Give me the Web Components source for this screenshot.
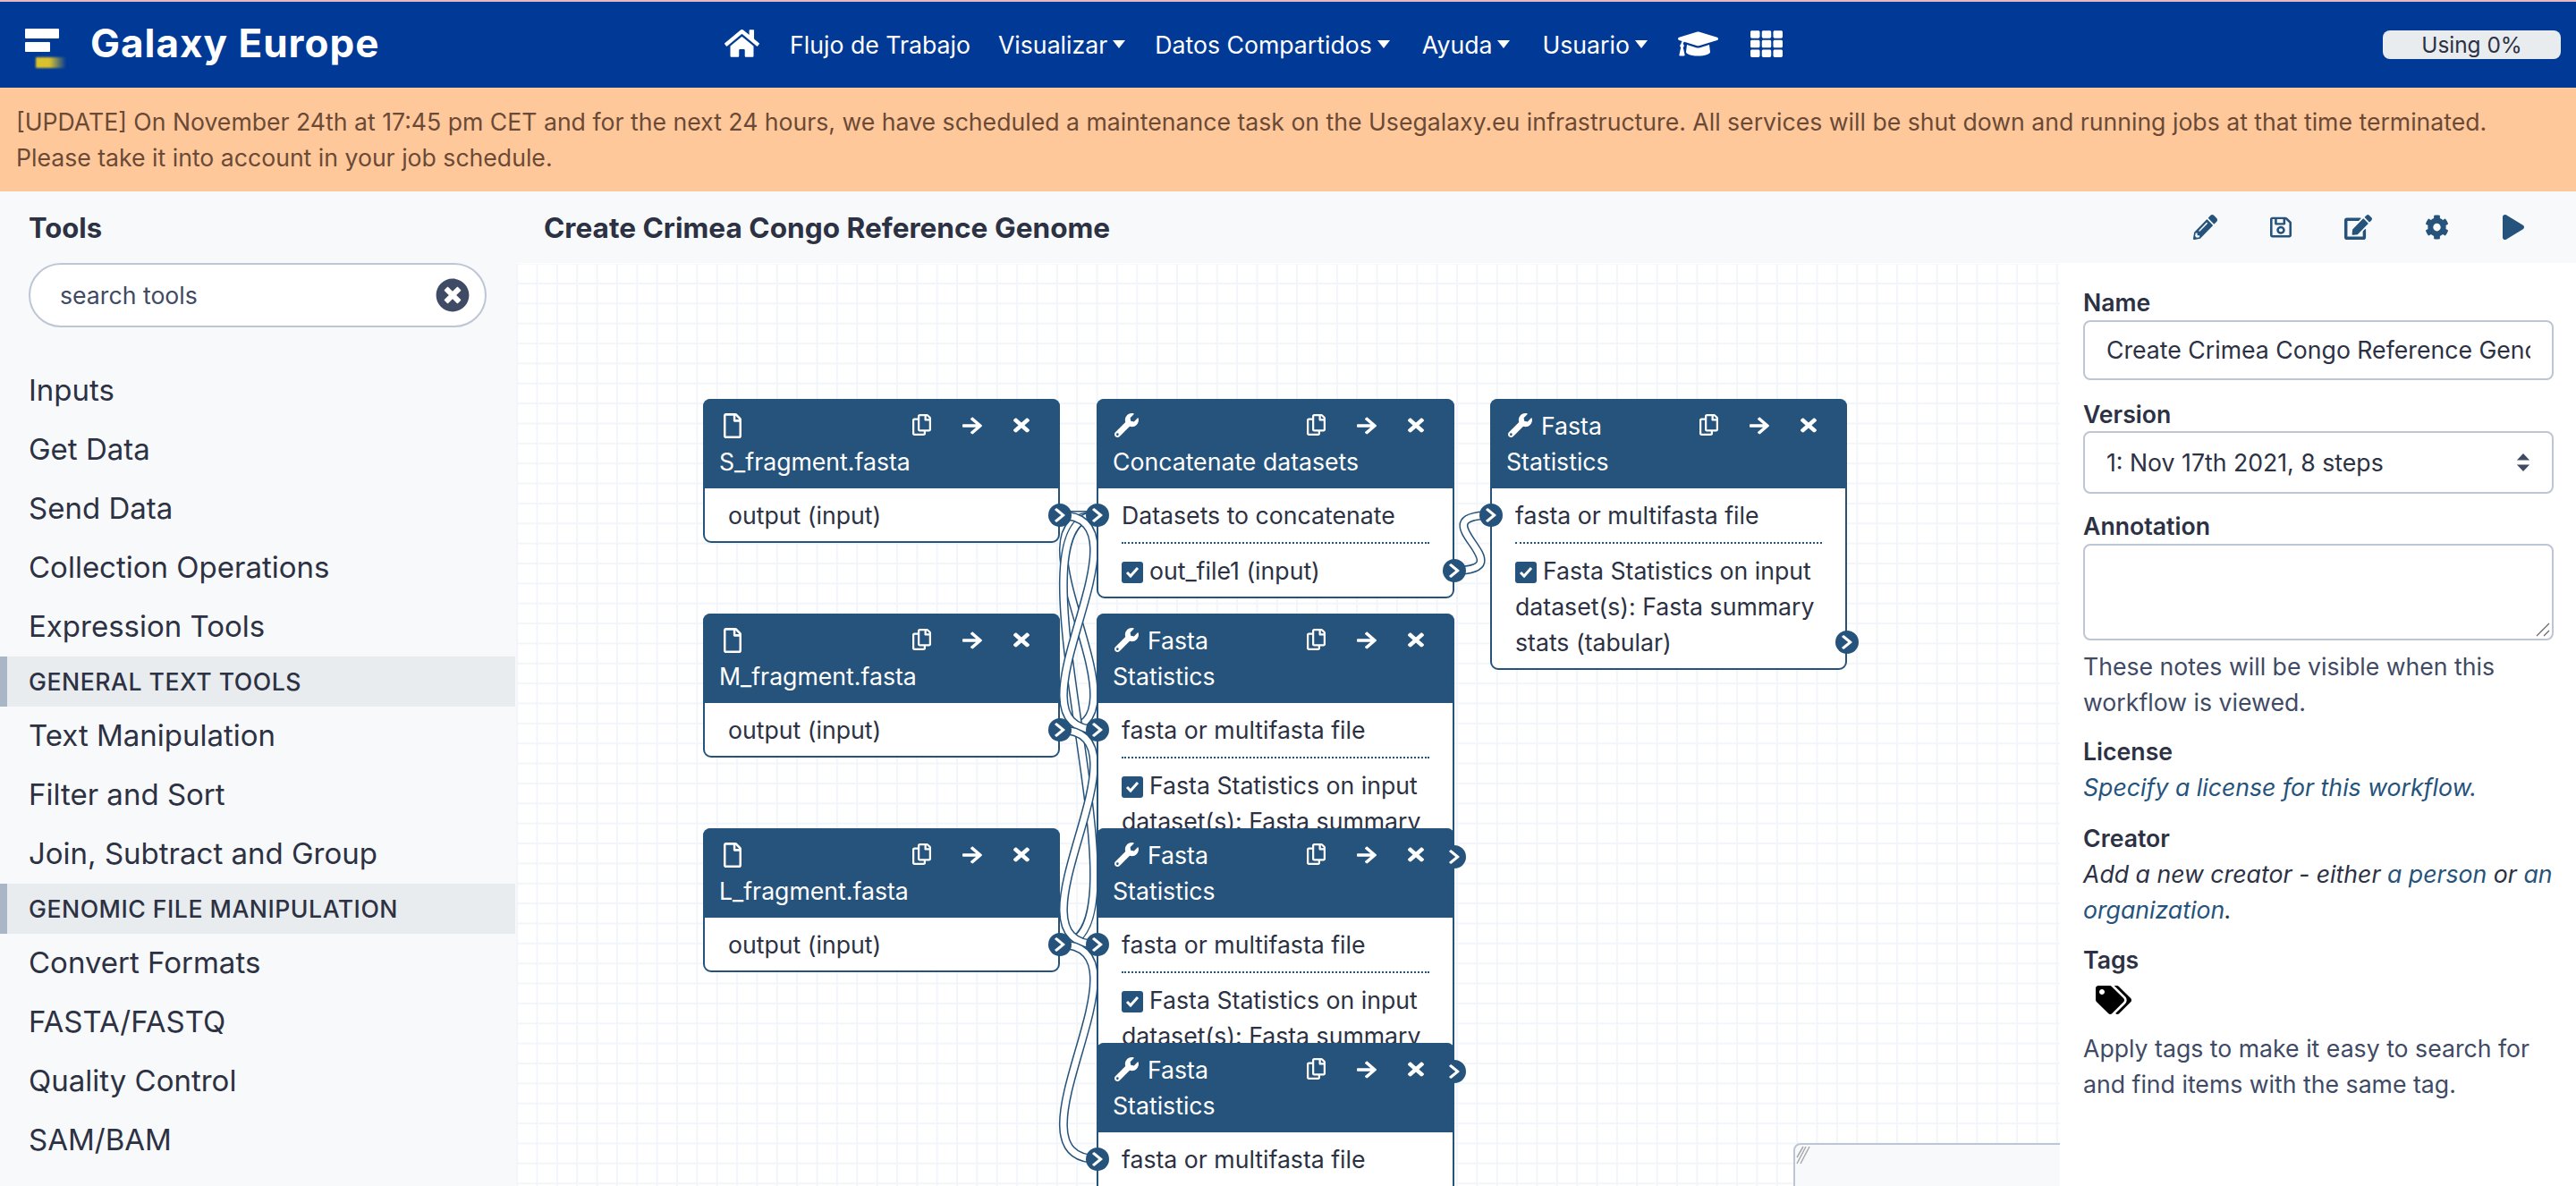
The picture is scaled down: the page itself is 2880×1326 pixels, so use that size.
<!DOCTYPE html>
<html lang="es">
<head>
<meta charset="utf-8">
<title>Galaxy Europe</title>
<style>
html,body{margin:0;padding:0;height:1326px;overflow:hidden;background:#fff;}
body{font:26.67px/40px Inter,"Noto Sans",sans-serif;color:#2c3143;}
gx-app{height:1326px;}
</style>
</head>
<body>
<gx-app>
  <gx-masthead slot="top" brand="Galaxy Europe" usage="Using 0%"></gx-masthead>
  <gx-banner slot="top">[UPDATE] On November 24th at 17:45 pm CET and for the next 24 hours, we have scheduled a maintenance task on the Usegalaxy.eu infrastructure. All services will be shut down and running jobs at that time terminated. Please take it into account in your job schedule.</gx-banner>
  <gx-toolbox slot="left"></gx-toolbox>
  <gx-editor-head slot="head">Create Crimea Congo Reference Genome</gx-editor-head>
  <gx-canvas slot="canvas">
    <gx-node icon="file" name="S_fragment.fasta" style="left:209px;top:152px;width:399px">
      <gx-row out>output (input)</gx-row>
    </gx-node>
    <gx-node icon="wrench" name="Concatenate datasets" style="left:649px;top:152px;width:400px">
      <gx-row in sep>Datasets to concatenate</gx-row>
      <gx-row out check>out_file1 (input)</gx-row>
    </gx-node>
    <gx-node icon="wrench" name="Fasta Statistics" style="left:1089px;top:152px;width:399px">
      <gx-row in sep>fasta or multifasta file</gx-row>
      <gx-row out check>Fasta Statistics on input dataset(s): Fasta summary stats (tabular)</gx-row>
    </gx-node>
    <gx-node icon="file" name="M_fragment.fasta" style="left:209px;top:392px;width:399px">
      <gx-row out>output (input)</gx-row>
    </gx-node>
    <gx-node icon="wrench" name="Fasta Statistics" style="left:649px;top:392px;width:400px">
      <gx-row in sep>fasta or multifasta file</gx-row>
      <gx-row out check>Fasta Statistics on input dataset(s): Fasta summary stats (tabular)</gx-row>
    </gx-node>
    <gx-node icon="file" name="L_fragment.fasta" style="left:209px;top:632px;width:399px">
      <gx-row out>output (input)</gx-row>
    </gx-node>
    <gx-node icon="wrench" name="Fasta Statistics" style="left:649px;top:632px;width:400px">
      <gx-row in sep>fasta or multifasta file</gx-row>
      <gx-row out check>Fasta Statistics on input dataset(s): Fasta summary stats (tabular)</gx-row>
    </gx-node>
    <gx-node icon="wrench" name="Fasta Statistics" style="left:649px;top:872px;width:400px">
      <gx-row in sep>fasta or multifasta file</gx-row>
      <gx-row out check>Fasta Statistics on input dataset(s): Fasta summary stats (tabular)</gx-row>
    </gx-node>
    <gx-minimap></gx-minimap>
  </gx-canvas>
  <gx-side slot="side"></gx-side>
</gx-app>
<script>
const ICONS={
home:['0 0 576 512','M280.37 148.26L96 300.11V464a16 16 0 0 0 16 16l112.06-.29a16 16 0 0 0 15.92-16V368a16 16 0 0 1 16-16h64a16 16 0 0 1 16 16v95.64a16 16 0 0 0 16 16.05L464 480a16 16 0 0 0 16-16V300L295.67 148.26a12.19 12.19 0 0 0-15.3 0zM571.6 251.47L488 182.56V44.05a12 12 0 0 0-12-12h-56a12 12 0 0 0-12 12v72.61L318.47 43a48 48 0 0 0-61 0L4.34 251.47a12 12 0 0 0-1.6 16.9l25.5 31A12 12 0 0 0 45.15 301l235.22-193.74a12.19 12.19 0 0 1 15.3 0L530.9 301a12 12 0 0 0 16.9-1.6l25.5-31a12 12 0 0 0-1.7-16.93z'],
cap:['0 0 640 512','M622.34 153.2L343.4 67.5c-15.2-4.67-31.6-4.67-46.79 0L17.66 153.2c-23.54 7.23-23.54 38.36 0 45.59l48.63 14.94c-10.67 13.19-17.23 29.28-17.88 46.9C38.78 266.15 32 276.11 32 288c0 10.78 5.68 19.85 13.86 25.65L20.33 428.53C18.11 438.52 25.71 448 35.94 448h56.11c10.24 0 17.84-9.48 15.62-19.47L82.14 313.65C90.32 307.85 96 298.78 96 288c0-11.57-6.47-21.25-15.66-26.87.76-15.02 8.44-28.3 20.69-36.72L296.6 284.5c9.06 2.78 26.44 6.25 46.79 0l278.95-85.7c23.55-7.24 23.55-38.36 0-45.6zM352.79 315.09c-28.53 8.76-52.84 3.92-65.59 0l-145.02-44.55L128 384c0 35.35 85.96 64 192 64s192-28.65 192-64l-14.18-113.47-145.03 44.56z'],
th:['0 0 512 512','M149.333 56v80c0 13.255-10.745 24-24 24H24c-13.255 0-24-10.745-24-24V56c0-13.255 10.745-24 24-24h101.333c13.255 0 24 10.745 24 24zm181.334 240v-80c0-13.255-10.745-24-24-24H205.333c-13.255 0-24 10.745-24 24v80c0 13.255 10.745 24 24 24h101.333c13.256 0 24.001-10.745 24.001-24zm32-240v80c0 13.255 10.745 24 24 24H488c13.255 0 24-10.745 24-24V56c0-13.255-10.745-24-24-24H386.667c-13.255 0-24 10.745-24 24zm-32 80V56c0-13.255-10.745-24-24-24H205.333c-13.255 0-24 10.745-24 24v80c0 13.255 10.745 24 24 24h101.333c13.256 0 24.001-10.745 24.001-24zm-205.334 56H24c-13.255 0-24 10.745-24 24v80c0 13.255 10.745 24 24 24h101.333c13.255 0 24-10.745 24-24v-80c0-13.255-10.745-24-24-24zM0 376v80c0 13.255 10.745 24 24 24h101.333c13.255 0 24-10.745 24-24v-80c0-13.255-10.745-24-24-24H24c-13.255 0-24 10.745-24 24zm386.667-56H488c13.255 0 24-10.745 24-24v-80c0-13.255-10.745-24-24-24H386.667c-13.255 0-24 10.745-24 24v80c0 13.255 10.745 24 24 24zm0 160H488c13.255 0 24-10.745 24-24v-80c0-13.255-10.745-24-24-24H386.667c-13.255 0-24 10.745-24 24v80c0 13.255 10.745 24 24 24zM181.333 376v80c0 13.255 10.745 24 24 24h101.333c13.255 0 24-10.745 24-24v-80c0-13.255-10.745-24-24-24H205.333c-13.255 0-24 10.745-24 24z'],
times:['0 0 352 512','M242.72 256l100.07-100.07c12.28-12.28 12.28-32.19 0-44.48l-22.24-22.24c-12.28-12.28-32.19-12.28-44.48 0L176 189.28 75.93 89.21c-12.28-12.28-32.19-12.28-44.48 0L9.21 111.45c-12.28 12.28-12.28 32.19 0 44.48L109.28 256 9.21 356.07c-12.28 12.28-12.28 32.19 0 44.48l22.24 22.24c12.28 12.28 32.2 12.28 44.48 0L176 322.72l100.07 100.07c12.28 12.28 32.2 12.28 44.48 0l22.24-22.24c12.28-12.28 12.28-32.19 0-44.48L242.72 256z'],
timescircle:['0 0 512 512','M256 8C119 8 8 119 8 256s111 248 248 248 248-111 248-248S393 8 256 8zm121.6 313.1c4.7 4.7 4.7 12.3 0 17L338 377.6c-4.7 4.7-12.3 4.7-17 0L256 312l-65.1 65.6c-4.7 4.7-12.3 4.7-17 0L134.4 338c-4.7-4.7-4.7-12.3 0-17l65.6-65-65.6-65.1c-4.7-4.7-4.7-12.3 0-17l39.6-39.6c4.7-4.7 12.3-4.7 17 0l65 65.7 65.1-65.6c4.7-4.7 12.3-4.7 17 0l39.6 39.6c4.7 4.7 4.7 12.3 0 17L312 256l65.6 65.1z'],
pencil:['0 0 512 512','M497.9 142.1l-46.1 46.1c-4.7 4.7-12.3 4.7-17 0l-111-111c-4.7-4.7-4.7-12.3 0-17l46.1-46.1c18.7-18.7 49.1-18.7 67.9 0l60.1 60.1c18.8 18.7 18.8 49.1 0 67.9zM284.2 99.8L21.6 362.4.4 483.9c-2.9 16.4 11.4 30.6 27.8 27.8l121.5-21.3 262.6-262.6c4.7-4.7 4.7-12.3 0-17l-111-111c-4.8-4.7-12.4-4.7-17.1 0zM124.1 339.9c-5.5-5.5-5.5-14.3 0-19.8l154-154c5.5-5.5 14.3-5.5 19.8 0s5.5 14.3 0 19.8l-154 154c-5.5 5.5-14.3 5.5-19.8 0zM88 424h48v36.3l-64.5 11.3-31.1-31.1L51.7 376H88v48z'],
save:['0 0 448 512','M433.941 129.941l-83.882-83.882A48 48 0 0 0 316.118 32H48C21.49 32 0 53.49 0 80v352c0 26.51 21.49 48 48 48h352c26.51 0 48-21.49 48-48V163.882a48 48 0 0 0-14.059-33.941zM272 80v80H144V80h128zm122 352H54a6 6 0 0 1-6-6V86a6 6 0 0 1 6-6h42v104c0 13.255 10.745 24 24 24h176c13.255 0 24-10.745 24-24V83.882l78.243 78.243a6 6 0 0 1 1.757 4.243V426a6 6 0 0 1-6 6zM224 232c-48.523 0-88 39.477-88 88s39.477 88 88 88 88-39.477 88-88-39.477-88-88-88zm0 128c-22.056 0-40-17.944-40-40s17.944-40 40-40 40 17.944 40 40-17.944 40-40 40z'],
edit:['0 0 576 512','M402.6 83.2l90.2 90.2c3.8 3.8 3.8 10 0 13.8L274.4 405.6l-92.8 10.3c-12.4 1.4-22.9-9.1-21.5-21.5l10.3-92.8L388.8 83.2c3.8-3.8 10-3.8 13.8 0zm162-22.9l-48.8-48.8c-15.2-15.2-39.9-15.2-55.2 0l-35.4 35.4c-3.8 3.8-3.8 10 0 13.8l90.2 90.2c3.8 3.8 10 3.8 13.8 0l35.4-35.4c15.2-15.3 15.2-40 0-55.2zM384 346.2V448H64V128h229.8c3.2 0 6.2-1.3 8.5-3.5l40-40c7.6-7.6 2.2-20.5-8.5-20.5H48C21.5 64 0 85.5 0 112v352c0 26.5 21.5 48 48 48h352c26.5 0 48-21.5 48-48V306.2c0-10.7-12.9-16-20.5-8.5l-40 40c-2.2 2.3-3.5 5.3-3.5 8.5z'],
cog:['0 0 512 512','M487.4 315.7l-42.6-24.6c4.3-23.2 4.3-47 0-70.2l42.6-24.6c4.9-2.8 7.1-8.6 5.5-14-11.1-35.6-30-67.8-54.7-94.6-3.8-4.1-10-5.1-14.8-2.3L380.8 110c-17.9-15.4-38.5-27.3-60.8-35.1V25.8c0-5.6-3.9-10.5-9.4-11.7-36.7-8.2-74.3-7.8-109.2 0-5.5 1.2-9.4 6.1-9.4 11.7V75c-22.2 7.9-42.8 19.8-60.8 35.1L88.7 85.5c-4.9-2.8-11-1.9-14.8 2.3-24.7 26.7-43.6 58.9-54.7 94.6-1.7 5.4.6 11.2 5.5 14L67.3 221c-4.3 23.2-4.3 47 0 70.2l-42.6 24.6c-4.9 2.8-7.1 8.6-5.5 14 11.1 35.6 30 67.8 54.7 94.6 3.8 4.1 10 5.1 14.8 2.3l42.6-24.6c17.9 15.4 38.5 27.3 60.8 35.1v49.2c0 5.6 3.9 10.5 9.4 11.7 36.7 8.2 74.3 7.8 109.2 0 5.5-1.2 9.4-6.1 9.4-11.7v-49.2c22.2-7.9 42.8-19.8 60.8-35.1l42.6 24.6c4.9 2.8 11 1.9 14.8-2.3 24.7-26.7 43.6-58.9 54.7-94.6 1.5-5.5-.7-11.3-5.6-14.1zM256 336c-44.1 0-80-35.9-80-80s35.9-80 80-80 80 35.9 80 80-35.9 80-80 80z'],
play:['0 0 448 512','M424.4 214.7L72.4 6.6C43.8-10.3 0 6.1 0 47.9V464c0 37.5 40.7 60.1 72.4 41.3l352-208c31.4-18.5 31.5-64.1 0-82.6z'],
file:['0 0 384 512','M369.9 97.9L286 14C277 5 264.8-.1 252.1-.1H48C21.5 0 0 21.5 0 48v416c0 26.5 21.5 48 48 48h288c26.5 0 48-21.5 48-48V131.9c0-12.7-5.1-25-14.1-34zM332.1 128H256V51.9l76.1 76.1zM48 464V48h160v104c0 13.3 10.7 24 24 24h104v288H48z'],
copy:['0 0 448 512','M433.941 65.941l-51.882-51.882A48 48 0 0 0 348.118 0H176c-26.51 0-48 21.49-48 48v48H48c-26.51 0-48 21.49-48 48v320c0 26.51 21.49 48 48 48h224c26.51 0 48-21.49 48-48v-48h80c26.51 0 48-21.49 48-48V99.882a48 48 0 0 0-14.059-33.941zM266 464H54a6 6 0 0 1-6-6V150a6 6 0 0 1 6-6h74v224c0 26.51 21.49 48 48 48h96v42a6 6 0 0 1-6 6zm128-96H182a6 6 0 0 1-6-6V54a6 6 0 0 1 6-6h106v88c0 13.255 10.745 24 24 24h88v202a6 6 0 0 1-6 6zm6-256h-64V48h9.632c1.591 0 3.117.632 4.243 1.757l48.368 48.368a6 6 0 0 1 1.757 4.243V112z'],
arrow:['0 0 448 512','M190.5 66.9l22.2-22.2c9.4-9.4 24.6-9.4 33.9 0L441 239c9.4 9.4 9.4 24.6 0 33.9L246.6 467.3c-9.4 9.4-24.6 9.4-33.9 0l-22.2-22.2c-9.5-9.5-9.3-25 .4-34.3L311.4 296H24c-13.3 0-24-10.7-24-24v-32c0-13.3 10.7-24 24-24h287.4L190.9 101.2c-9.8-9.3-10-24.8-.4-34.3z'],
wrench:['0 0 512 512','M507.73 109.1c-2.24-9.03-13.54-12.09-20.12-5.51l-74.36 74.36-67.88-11.31-11.31-67.88 74.36-74.36c6.62-6.62 3.43-17.9-5.66-20.16-47.38-11.74-99.55.91-136.58 37.93-39.64 39.64-50.55 97.1-34.05 147.2L18.74 402.76c-24.99 24.99-24.99 65.51 0 90.5 24.99 24.99 65.51 24.99 90.5 0l213.21-213.21c50.12 16.71 107.47 5.68 147.37-34.22 37.07-37.07 49.7-89.32 37.91-136.73zM64 472c-13.25 0-24-10.75-24-24 0-13.26 10.75-24 24-24s24 10.74 24 24c0 13.25-10.75 24-24 24z'],
chevron:['0 0 320 512','M285.476 272.971L91.132 467.314c-9.373 9.373-24.569 9.373-33.941 0l-22.667-22.667c-9.357-9.357-9.375-24.522-.04-33.901L188.505 256 34.484 101.255c-9.335-9.379-9.317-24.544.04-33.901l22.667-22.667c9.373-9.373 24.569-9.373 33.941 0L285.475 239.03c9.373 9.372 9.373 24.568.001 33.941z'],
tags:['0 0 640 512','M497.941 225.941L286.059 14.059A48 48 0 0 0 252.118 0H48C21.49 0 0 21.49 0 48v204.118a48 48 0 0 0 14.059 33.941l211.882 211.882c18.744 18.745 49.136 18.746 67.882 0l204.118-204.118c18.745-18.745 18.745-49.137 0-67.882zM112 160c-26.51 0-48-21.49-48-48s21.49-48 48-48 48 21.49 48 48-21.49 48-48 48zm513.941 133.823L421.823 497.941c-18.745 18.745-49.137 18.745-67.882 0l-.36-.36L527.64 323.522c16.999-16.999 26.36-39.6 26.36-63.64s-9.362-46.641-26.36-63.64L331.397 0h48.721a48 48 0 0 1 33.941 14.059l211.882 211.882c18.745 18.745 18.745 49.137 0 67.882z']
};
function icon(name,w,h,color,extra){const [vb,d]=ICONS[name];
 return `<svg viewBox="${vb}" width="${w}" height="${h}" preserveAspectRatio="none" style="display:block;flex:none;${extra||''}"><path fill="${color}" d="${d}"/></svg>`;}
function shadow(el,html){el.attachShadow({mode:'open'}).innerHTML=html;}

customElements.define('gx-app',class extends HTMLElement{constructor(){super();shadow(this,`<style>
:host{display:flex;flex-direction:column;width:2880px;overflow:hidden}
.main{flex:1;display:flex;min-height:0;background:#f8f9fa}
.center{flex:1;display:flex;flex-direction:column;min-width:0}
.work{flex:1;display:flex;min-height:0}
</style><slot name="top"></slot><div class="main"><slot name="left"></slot><div class="center"><slot name="head"></slot><div class="work"><slot name="canvas"></slot><slot name="side"></slot></div></div></div>`);}});

customElements.define('gx-masthead',class extends HTMLElement{connectedCallback(){if(this.shadowRoot)return;
 const c=(t,x)=>`<span class="link caret" ${x?`style="${x}"`:''}>${t}</span>`;
 shadow(this,`<style>
:host{display:flex;align-items:center;height:96px;background:#003a96;border-top:2px solid #e8b7c4;color:#fff;position:relative}
.logo{width:101px;height:96px;flex:none;display:flex;flex-direction:column;justify-content:flex-start;padding:30px 0 0 28px;box-sizing:border-box;gap:4px}
.logo i{display:block;background:#fff;border-radius:1px;filter:blur(.6px)}
.logo .y{margin:2px 0 0 12px;width:34px;height:12px;background:linear-gradient(90deg,#d9c22e 45%,#003a96);filter:blur(1px)}
.brand{font-weight:700;font-size:44px;line-height:96px;width:709px;flex:none;letter-spacing:1px;margin-top:-4px}
nav{display:flex;align-items:center;font-size:26.67px;gap:33px;white-space:nowrap}
.caret::after{content:"";display:inline-block;margin-left:6px;vertical-align:6px;border:7.5px solid transparent;border-top:9px solid #fff;border-bottom:0}
.usage{position:absolute;left:2664px;top:32px;width:199px;height:32px;border-radius:8px;background:#e9ecef;color:#2c3143;font-size:24.4px;line-height:32px;text-align:center}
</style><div class="logo"><i style="width:38px;height:11px"></i><i style="width:28px;height:11px"></i><i class="y"></i></div>
<div class="brand">${this.getAttribute('brand')}</div>
<nav>${icon('home',39,35,'#fff','margin-bottom:3px')}<span class="link" style="margin-left:1px">Flujo de Trabajo</span>${c('Visualizar','margin-left:-2px')}${c('Datos Compartidos')}${c('Ayuda','margin-left:3px')}${c('Usuario','margin-left:3px')}${icon('cap',45,36,'#fff','margin-bottom:3px;margin-left:1px')}${icon('th',36,34,'#fff','margin-bottom:3px;margin-left:3px')}</nav>
<div class="usage">${this.getAttribute('usage')}</div>`);}});

customElements.define('gx-banner',class extends HTMLElement{constructor(){super();shadow(this,`<style>
:host{display:block;height:116px;box-sizing:border-box;background:#ffc89b;color:#6a4a36;padding:18px 18px 0 18px;font-size:26.64px;line-height:40.4px}
</style><slot></slot>`);}});

customElements.define('gx-toolbox',class extends HTMLElement{connectedCallback(){if(this.shadowRoot)return;
 const it=t=>`<div class="it">${t}</div>`, se=t=>`<div class="se">${t}</div>`;
 shadow(this,`<style>
:host{display:block;width:576px;flex:none;background:#f8f9fa;overflow:hidden;margin-right:1px}
h2{margin:0;padding:21px 32px 0;font-size:31px;line-height:40px;font-weight:700;color:#2c3143}
.search{margin:19px 32px 0 32px;width:512px;height:72px;box-sizing:border-box;border:2px solid #bdc6d5;border-radius:36px;background:#fff;display:flex;align-items:center;justify-content:space-between;padding:0 17px 0 33px;font-size:26.67px;color:#3f4a65}
.list{margin-top:37px}
.it{height:66px;line-height:66px;padding-left:32px;font-size:33px;color:#2c3143;white-space:nowrap}
.se{height:56px;line-height:56px;margin-top:1px;margin-bottom:-1px;padding-left:24px;border-left:8px solid #a9b6c6;background:#e9ecef;font-size:26.67px;font-weight:500;letter-spacing:.5px;text-transform:uppercase;color:#2c3143;white-space:nowrap}
</style><h2>Tools</h2><div class="search"><span>search tools</span>${icon('timescircle',38,38,'#3f4a65')}</div>
<div class="list">${it('Inputs')}${it('Get Data')}${it('Send Data')}${it('Collection Operations')}${it('Expression Tools')}${se('General Text Tools')}${it('Text Manipulation')}${it('Filter and Sort')}${it('Join, Subtract and Group')}${se('Genomic File Manipulation')}${it('Convert Formats')}${it('FASTA/FASTQ')}${it('Quality Control')}${it('SAM/BAM')}</div>`);}});

customElements.define('gx-editor-head',class extends HTMLElement{connectedCallback(){if(this.shadowRoot)return;
 shadow(this,`<style>
:host{display:flex;align-items:center;height:80px;flex:none;background:#f8f9fa;padding-left:31px;position:relative}
.t{font-size:31.6px;font-weight:700;color:#2c3143;white-space:nowrap;margin-top:2px}
.b{position:absolute;top:0;bottom:0;display:flex;align-items:center}
</style><div class="t"><slot></slot></div>
<div class="b" style="left:1875px">${icon('pencil',27,28,'#25537b')}</div>
<div class="b" style="left:1961px">${icon('save',24,26,'#25537b')}</div>
<div class="b" style="left:2044px">${icon('edit',31,28,'#25537b')}</div>
<div class="b" style="left:2134px">${icon('cog',27,28,'#25537b')}</div>
<div class="b" style="left:2221px">${icon('play',24,28,'#25537b')}</div>`);}});

customElements.define('gx-canvas',class extends HTMLElement{connectedCallback(){if(this.shadowRoot)return;
 const OX=577,OY=294;
 const wires=[[1185,576,1227,576],[1185,816,1227,816],[1185,1056,1227,1056],[1185,816,1227,576],[1185,1056,1227,576],[1185,576,1227,816],[1185,816,1227,1056],[1185,1056,1227,1296],[1625,638,1667,576]];
 const wirePath=([a,b,c,d])=>{const x1=a-OX,y1=b-OY,x2=c-OX,y2=d-OY,cp=Math.abs(y2-y1)<80?85:112;
   return `M${x1} ${y1}C${x1+cp} ${y1} ${x2-cp} ${y2} ${x2} ${y2}`;};
 const s=wires.map(w=>{const p=wirePath(w);return `<path d="${p}" stroke="#25537b" stroke-width="10" fill="none"/><path d="${p}" stroke="#fff" stroke-width="7" fill="none"/>`;}).join('');
 shadow(this,`<style>
:host{display:block;flex:1;position:relative;overflow:hidden;background-color:#fff}
svg{position:absolute;left:0;top:0}
.grid{position:absolute;inset:1px 0 0 0;background-image:linear-gradient(90deg,#f2f5fa 2px,transparent 2px),linear-gradient(#f2f5fa 2px,transparent 2px);background-size:22.37px 22.37px;background-position:22.5px 21px}
</style><div class="grid"></div><svg width="1727" height="1032">${s}</svg><slot></slot>`);}});

customElements.define('gx-node',class extends HTMLElement{connectedCallback(){if(this.shadowRoot)return;
 const ic=this.getAttribute('icon'),w=ic==='file'?[20,28,'margin:6px 8px 0 5px']:[27,27,'margin:6px 10px 0 2px'];
 const name=this.getAttribute('name');
 const brk=name.startsWith('Fasta')?'':'<br>';
 shadow(this,`<style>
:host{position:absolute;display:block;box-sizing:border-box;border:2px solid #25537b;border-radius:9px;background:#fff;color:#2c3143;font-size:26.67px;line-height:40px}
.h{background:#25537b;color:#fff;padding:10px 16px 9px 18px;height:100px;box-sizing:border-box;margin:-2px -2px 0;border-radius:8px 8px 0 0}
.tools{float:right;height:36px;margin-right:16px;width:132px;position:relative}
.tools svg{position:absolute}
.lead{display:inline-block;vertical-align:top}
.b{padding:10px 0 9px}
</style><div class="h"><div class="tools">${icon('copy',21,24,'#fff','left:-1px;top:7px')}${icon('arrow',22,22,'#fff','left:55px;top:9px')}${icon('times',18,23,'#fff','left:112px;top:8px')}</div><span class="lead">${icon(ic,w[0],w[1],'#fff',w[2])}</span>${brk}<span class="name">${name}</span></div><div class="b"><slot></slot></div>`);}});

customElements.define('gx-row',class extends HTMLElement{connectedCallback(){if(this.shadowRoot)return;
 const inp=this.hasAttribute('in'),out=this.hasAttribute('out'),check=this.hasAttribute('check'),sep=this.hasAttribute('sep');
 const port=(c)=>`<div class="port ${c}">${icon('chevron',14,18,'#fff')}</div>`;
 shadow(this,`<style>
:host{display:block;position:relative;margin:0 26px;${sep?'padding-bottom:10px;border-bottom:2px dotted #25537b;margin-bottom:10px;':''}}
.cb{display:inline-block;width:24px;height:24px;border-radius:3px;background:#25537b;vertical-align:-4px;margin-right:7px;position:relative}
.cb svg{position:absolute;left:4px;top:5px}
.port{position:absolute;width:26px;height:26px;border-radius:50%;background:#25537b;display:flex;align-items:center;justify-content:center;z-index:2}
.in{left:-40px;top:7px}
.out{right:-41px;bottom:7px}
</style>${inp?port('in'):''}${check?`<span class="cb"><svg width="16" height="14" viewBox="0 0 16 14"><path d="M2 7l4 4 8-9" fill="none" stroke="#fff" stroke-width="3"/></svg></span>`:''}<slot></slot>${out?port('out'):''}`);}});

customElements.define('gx-minimap',class extends HTMLElement{constructor(){super();shadow(this,`<style>
:host{position:absolute;left:1428px;top:984px;width:400px;height:200px;box-sizing:border-box;border:2px solid #bdc6d5;border-radius:8px 0 0 0;background:#f8f9fa}
svg{position:absolute;left:0;top:0}
</style><svg width="24" height="24"><path d="M2 21L12 2M6 21L16 2M2 14L9 2" stroke="#a7a9ac" stroke-width="1.5"/></svg>`);}});

customElements.define('gx-side',class extends HTMLElement{connectedCallback(){if(this.shadowRoot)return;
 shadow(this,`<style>
:host{display:block;width:577px;flex:none;background:#fff;box-sizing:border-box;padding:24px 25px 0 26px;font-size:26.67px;line-height:40px;color:#2c3143;position:relative;z-index:2}
label{display:block;font-weight:600;color:#2c3143}
.box{box-sizing:border-box;border:2px solid #bdc6d5;border-radius:8px;background:#fff;padding:0 24px;position:relative}
.clip{overflow:hidden;white-space:nowrap}
.f{margin-bottom:18px}
.help{color:#3f4a65}
a{color:#25537b;text-decoration:none}
em{font-style:italic}
</style>
<div class="f"><label>Name</label><div class="box" style="height:67px;line-height:63px"><div class="clip">Create Crimea Congo Reference Genome</div></div></div>
<div class="f" style="margin-bottom:16px"><label style="margin-bottom:-1px">Version</label><div class="box" style="height:70px;line-height:67px">1: Nov 17th 2021, 8 steps<svg width="16" height="20" viewBox="0 0 18 24" preserveAspectRatio="none" style="position:absolute;right:24px;top:23px"><path d="M9 0l8 9H1zM9 24l8-9H1z" fill="#3f4a65"/></svg></div></div>
<div class="f" style="margin-bottom:15px"><label>Annotation</label><div class="box" style="height:108px"><svg width="16" height="16" viewBox="0 0 16 16" style="position:absolute;right:2px;bottom:2px"><path d="M1 15L15 1M9 15l6-6" stroke="#666" stroke-width="1.2"/></svg></div><div class="help" style="margin-top:9px">These notes will be visible when this workflow is viewed.</div></div>
<div class="f" style="margin-bottom:17px"><label>License</label><em><a>Specify a license for this workflow.</a></em></div>
<div class="f" style="margin-bottom:16px"><label>Creator</label><em>Add a new creator - either <a>a person</a> or <a>an organization</a>.</em></div>
<div><label>Tags</label><div style="margin:9px 0 18px 14px">${icon('tags',40,32,'#000')}</div><div class="help">Apply tags to make it easy to search for and find items with the same tag.</div></div>`);}});
</script>
</body>
</html>
